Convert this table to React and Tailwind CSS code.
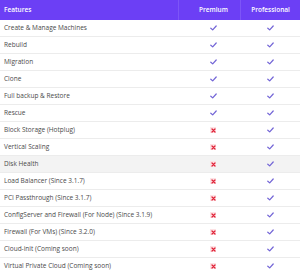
const rows = [
  ["Create & Manage Machines", true, true],
  ["Rebuild", true, true],
  ["Migration", true, true],
  ["Clone", true, true],
  ["Full backup & Restore", true, true],
  ["Rescue", true, true],
  ["Block Storage (Hotplug)", false, true],
  ["Vertical Scaling", false, true],
  ["Disk Health", false, true],
  ["Load Balancer (Since 3.1.7)", false, true],
  ["PCI Passthrough (Since 3.1.7)", false, true],
  ["ConfigServer and Firewall (For Node) (Since 3.1.9)", false, true],
  ["Firewall (For VMs) (Since 3.2.0)", false, true],
  ["Cloud-init (Coming soon)", false, true],
  ["Virtual Private Cloud (Coming soon)", false, true],
];

function Check() {
  return (
    <svg width="7" height="6" viewBox="0 0 7 6" fill="none">
      <path d="M0.8 3.2 L2.7 4.9 L6.2 1" stroke="#7264d6" strokeWidth="1.2" strokeLinecap="round" strokeLinejoin="round" />
    </svg>
  );
}

function Cross() {
  return (
    <span className="flex h-[6px] w-[6px] items-center justify-center bg-[#fde2e4]">
      <svg width="5" height="5" viewBox="0 0 5 5">
        <path d="M1 1 L4 4 M4 1 L1 4" stroke="#e0243a" strokeWidth="1.3" strokeLinecap="round" />
      </svg>
    </span>
  );
}

export default function App() {
  return (
    <div className="w-[300px] h-[274px] overflow-hidden bg-white text-[6.5px] font-['Open_Sans',sans-serif] text-[#4a4a4a]">
      {/* Header */}
      <div className="grid h-[20px] grid-cols-[178px_62px_60px] items-center bg-[#6c3ff5] font-semibold text-white">
        <div className="pl-[4px]">Features</div>
        <div className="flex h-full items-center justify-center border-l border-[#7d55f7] pl-[8px]">Premium</div>
        <div className="flex h-full items-center justify-center border-l border-[#7d55f7]">Professional</div>
      </div>

      {/* Rows */}
      {rows.map(([name, premium, pro]) => (
        <div
          key={name}
          className={`grid h-[17px] grid-cols-[178px_62px_60px] items-center border-b border-[#ececec] ${
            name === "Disk Health" ? "bg-[#f3f3f3]" : "bg-white"
          }`}
        >
          <div className="whitespace-nowrap pl-[4px]">{name}</div>
          <div className="flex justify-center pl-[8px]">{premium ? <Check /> : <Cross />}</div>
          <div className="flex justify-center">{pro ? <Check /> : <Cross />}</div>
        </div>
      ))}
    </div>
  );
}
